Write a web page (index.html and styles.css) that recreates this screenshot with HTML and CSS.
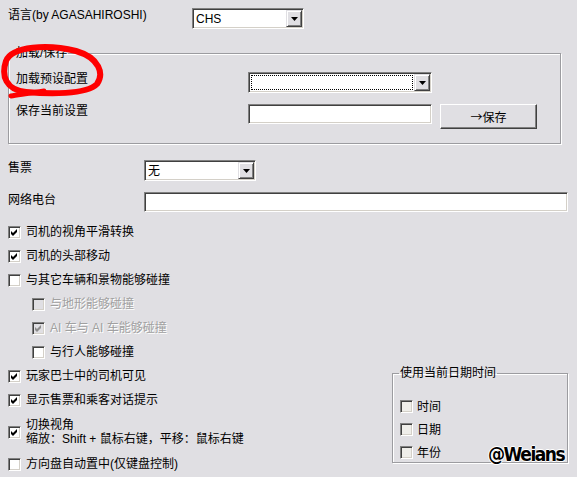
FILE: index.html
```html
<!DOCTYPE html>
<html lang="zh">
<head>
  <meta charset="UTF-8">
  <title>设置</title>
  <link rel="stylesheet" href="styles.css">
</head>
<body>
  <div class="page">
    <div class="row">
      <span class="label lang-label">语言(by AGASAHIROSHI)</span>
      <div class="combo combo-lang">
        <span class="combo-value">CHS</span>
        <span class="combo-btn"><svg width="7" height="4" viewBox="0 0 7 4"><polygon points="0,0 7,0 3.5,4" fill="#000"/></svg></span>
      </div>
    </div>

    <fieldset class="group preset-group">
      <legend>加载/保存</legend>
      <div class="row">
        <span class="label preset-label">加载预设配置</span>
        <div class="combo combo-preset">
          <span class="combo-value"><span class="focus-rect"></span></span>
          <span class="combo-btn"><svg width="7" height="4" viewBox="0 0 7 4"><polygon points="0,0 7,0 3.5,4" fill="#000"/></svg></span>
        </div>
      </div>
      <div class="row save-row">
        <span class="label preset-label">保存当前设置</span>
        <div class="edit edit-preset"></div>
        <button class="btn save-btn">→保存</button>
      </div>
    </fieldset>

    <div class="row ticket-row">
      <span class="label main-label">售票</span>
      <div class="combo combo-ticket">
        <span class="combo-value">无</span>
        <span class="combo-btn"><svg width="7" height="4" viewBox="0 0 7 4"><polygon points="0,0 7,0 3.5,4" fill="#000"/></svg></span>
      </div>
    </div>
    <div class="row radio-row">
      <span class="label main-label">网络电台</span>
      <div class="edit edit-radio"></div>
    </div>

    <div class="lower">
      <div class="options">
        <div class="opt"><span class="chk"><svg width="11" height="11" viewBox="0 0 11 11"><path d="M2 4 L4 6 L8 2 L8 5 L4 9 L2 7 Z" fill="#000"/></svg></span><span>司机的视角平滑转换</span></div>
        <div class="opt"><span class="chk"><svg width="11" height="11" viewBox="0 0 11 11"><path d="M2 4 L4 6 L8 2 L8 5 L4 9 L2 7 Z" fill="#000"/></svg></span><span>司机的头部移动</span></div>
        <div class="opt"><span class="chk"></span><span>与其它车辆和景物能够碰撞</span></div>
        <div class="opt sub disabled"><span class="chk"></span><span>与地形能够碰撞</span></div>
        <div class="opt sub disabled"><span class="chk"><svg width="11" height="11" viewBox="0 0 11 11"><path d="M2 4 L4 6 L8 2 L8 5 L4 9 L2 7 Z" fill="#8c8c8c"/></svg></span><span>AI 车与 AI 车能够碰撞</span></div>
        <div class="opt sub"><span class="chk"></span><span>与行人能够碰撞</span></div>
        <div class="opt"><span class="chk"><svg width="11" height="11" viewBox="0 0 11 11"><path d="M2 4 L4 6 L8 2 L8 5 L4 9 L2 7 Z" fill="#000"/></svg></span><span>玩家巴士中的司机可见</span></div>
        <div class="opt"><span class="chk"><svg width="11" height="11" viewBox="0 0 11 11"><path d="M2 4 L4 6 L8 2 L8 5 L4 9 L2 7 Z" fill="#000"/></svg></span><span>显示售票和乘客对话提示</span></div>
        <div class="opt tall"><span class="chk"><svg width="11" height="11" viewBox="0 0 11 11"><path d="M2 4 L4 6 L8 2 L8 5 L4 9 L2 7 Z" fill="#000"/></svg></span><span class="two-line">切换视角<br>缩放：Shift + 鼠标右键，平移：鼠标右键</span></div>
        <div class="opt"><span class="chk"></span><span>方向盘自动置中(仅键盘控制)</span></div>
      </div>

      <fieldset class="group date-group">
        <legend>使用当前日期时间</legend>
        <div class="date-opt"><span class="chk light"></span><span>时间</span></div>
        <div class="date-opt"><span class="chk light"></span><span>日期</span></div>
        <div class="date-opt"><span class="chk light"></span><span>年份</span></div>
      </fieldset>
    </div>

    <!-- 截图上的红圈标记 -->
    <svg class="mark" width="120" height="110" viewBox="0 0 120 110">
      <path d="M76 51 C48 44, 12 46, 6 61 C1 76, 6 90, 26 92 C48 94, 86 95, 97 84 C104 74, 100 58, 76 51" fill="none" stroke="#ff0000" stroke-width="6" stroke-linecap="round"/>
      <path d="M44 91 C30 93, 18 95, 11 96" fill="none" stroke="#ff0000" stroke-width="5" stroke-linecap="round"/>
    </svg>
    <span class="watermark">@Weians</span>
  </div>
</body>
</html>
```

FILE: styles.css
```css
body {
  margin: 0;
  background-color: #e0dfe3;
  font-family: 'Liberation Sans', 'Noto Sans CJK SC', sans-serif;
  font-size: 12px;
  color: #000;
}
.page {
  position: relative;
  width: 577px;
  height: 477px;
  padding: 8px 0 0 8px;
  box-sizing: border-box;
  overflow: hidden;
}
.row {
  display: flex;
  align-items: flex-start;
}
.label {
  line-height: 14px;
  white-space: nowrap;
}
.lang-label { width: 184px; }
.preset-label { width: 232px; }
.main-label { width: 136px; padding-top: 1px; }

/* 下拉框 */
.combo {
  display: flex;
  height: 21px;
  box-sizing: border-box;
  padding: 1px;
  background-color: #fff;
  border: 1px solid;
  border-color: #808080 #fff #fff #808080;
  box-shadow: inset 1px 1px #404040, inset -1px -1px #d4d0c8;
}
.combo-lang { width: 112px; }
.combo-preset { width: 184px; }
.combo-ticket { width: 112px; }
.combo-value {
  flex: 1;
  display: flex;
  align-items: center;
  padding-left: 2px;
  line-height: 14px;
  background-color: #fff;
}
.focus-rect {
  display: block;
  width: 100%;
  height: 15px;
  margin-left: -1px;
  border: 1px dotted #000;
  box-sizing: border-box;
}
.combo-btn {
  width: 16px;
  display: flex;
  justify-content: center;
  align-items: center;
  box-sizing: border-box;
  background-color: #e0dfe3;
  border: 1px solid;
  border-color: #e0dfe3 #404040 #404040 #e0dfe3;
  box-shadow: inset 1px 1px #fff, inset -1px -1px #808080;
}

/* 输入框 */
.edit {
  height: 20px;
  box-sizing: border-box;
  background-color: #fff;
  border: 1px solid;
  border-color: #808080 #fff #fff #808080;
  box-shadow: inset 1px 1px #404040, inset -1px -1px #d4d0c8;
}
.edit-preset { width: 184px; }
.edit-radio { width: 424px; }

.btn {
  margin-left: 8px;
  width: 97px;
  height: 25px;
  padding: 0;
  font-family: 'Noto Sans CJK SC', sans-serif;
  font-size: 12px;
  color: #000;
  background-color: #e0dfe3;
  border: 1px solid;
  border-color: #fff #404040 #404040 #fff;
  box-shadow: inset -1px -1px #808080;
}

/* 分组框 */
.group {
  margin: 0;
  border: 1px solid #9c9ca0;
  box-shadow: inset 1px 1px #fff, 1px 1px #fff;
}
.group legend {
  padding: 0 1px;
  margin-left: -1px;
  line-height: 14px;
}
.preset-group {
  width: 553px;
  box-sizing: border-box;
  margin-top: 17px;
  padding: 12px 7px 14px;
}
.save-row { margin-top: 11px; }
.ticket-row { margin-top: 16px; }
.radio-row { margin-top: 11px; }

.lower {
  display: flex;
  margin-top: 8px;
}
.options {
  width: 384px;
}
.opt {
  display: flex;
  align-items: center;
  height: 24px;
  line-height: 14px;
  white-space: nowrap;
}
.opt.sub { padding-left: 24px; }
.opt.tall { height: 40px; }
.opt.disabled { color: #a0a0a0; text-shadow: 1px 1px #fff; }

.chk {
  width: 13px;
  height: 13px;
  flex: none;
  box-sizing: border-box;
  margin-right: 5px;
  background-color: #fff;
  border: 1px solid;
  border-color: #808080 #fff #fff #808080;
  box-shadow: inset 1px 1px #404040, inset -1px -1px #d4d0c8;
}
.chk svg { display: block; }
.opt.disabled .chk { background-color: #e0dfe3; }
.chk.light { background-color: #efeeea; margin-right: 4px; }

.date-group {
  width: 176px;
  box-sizing: border-box;
  margin-top: 146px;
  height: 97px;
  padding: 20px 7px 0;
}
.date-opt {
  display: flex;
  align-items: center;
  height: 13px;
  line-height: 14px;
  margin-bottom: 10px;
}

.mark {
  position: absolute;
  left: 0;
  top: 0;
}
.watermark {
  position: absolute;
  left: 488px;
  top: 443px;
  font-family: 'DejaVu Sans Condensed', 'DejaVu Sans', sans-serif;
  font-weight: bold;
  font-size: 19px;
  letter-spacing: -1.5px;
  color: #000;
  text-shadow: 1px 0 #fff, -1px 0 #fff, 0 1px #fff, 0 -1px #fff;
}
```
